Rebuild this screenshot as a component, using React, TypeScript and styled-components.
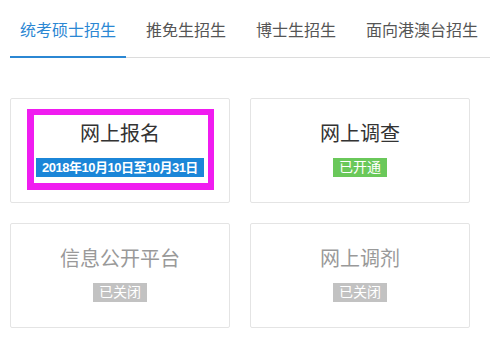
import React from "react";
import styled, { createGlobalStyle } from "styled-components";

const Global = createGlobalStyle`
  html, body { margin: 0; padding: 0; background: #fff; }
  body { font-family: "Liberation Sans", Arial, "Noto Sans CJK SC", sans-serif; }
`;

const Page = styled.div`
  width: 490px;
  height: 349px;
  padding: 0 10px;
  box-sizing: border-box;
  overflow: hidden;
`;

const TabBar = styled.div`
  display: flex;
  border-bottom: 1px solid #dcdcdc;
  margin-right: -10px;
`;

const Tab = styled.div<{ $active?: boolean }>`
  padding: 16px 10px 10px;
  margin-right: 10px;
  margin-bottom: -1px;
  font-size: 16px;
  line-height: 30px;
  white-space: nowrap;
  color: ${(p) => (p.$active ? "#2b87d3" : "#555")};
  border-bottom: 2px solid ${(p) => (p.$active ? "#2b87d3" : "transparent")};
`;

const Grid = styled.div`
  display: grid;
  grid-template-columns: 220px 220px;
  column-gap: 20px;
  row-gap: 20px;
  margin-top: 40px;
`;

const Card = styled.div`
  position: relative;
  height: 105px;
  box-sizing: border-box;
  border: 1px solid #e4e4e4;
  border-radius: 2px;
  padding-top: 21px;
  display: flex;
  flex-direction: column;
  align-items: center;
`;

const Title = styled.div<{ $off?: boolean }>`
  font-size: 20px;
  line-height: 28px;
  color: ${(p) => (p.$off ? "#999" : "#333")};
  margin-bottom: 10px;
`;

const Badge = styled.div<{ $tone: "blue" | "green" | "gray" }>`
  height: 19px;
  line-height: 19px;
  padding: 0 6px;
  color: #fff;
  font-size: ${(p) => (p.$tone === "blue" ? "13px" : "14px")};
  letter-spacing: ${(p) => (p.$tone === "blue" ? "-0.5px" : "0")};
  font-weight: ${(p) => (p.$tone === "blue" ? 700 : 400)};
  background: ${(p) =>
    p.$tone === "blue" ? "#1b86d8" : p.$tone === "green" ? "#6ac85a" : "#c2c2c2"};
  white-space: nowrap;
`;

const Highlight = styled.div`
  position: absolute;
  left: 16px;
  top: 10px;
  width: 187px;
  height: 81px;
  box-sizing: border-box;
  border: 6px solid #f01cf0;
  border-left-width: 7px;
  border-bottom-width: 7px;
  pointer-events: none;
`;

const tabs = ["统考硕士招生", "推免生招生", "博士生招生", "面向港澳台招生"];

type Item = { title: string; badge: string; tone: "blue" | "green" | "gray"; mark?: boolean };

const items: Item[] = [
  { title: "网上报名", badge: "2018年10月10日至10月31日", tone: "blue", mark: true },
  { title: "网上调查", badge: "已开通", tone: "green" },
  { title: "信息公开平台", badge: "已关闭", tone: "gray" },
  { title: "网上调剂", badge: "已关闭", tone: "gray" },
];

export default function App() {
  return (
    <Page>
      <Global />
      <TabBar>
        {tabs.map((t, i) => (
          <Tab key={t} $active={i === 0}>
            {t}
          </Tab>
        ))}
      </TabBar>
      <Grid>
        {items.map((it) => (
          <Card key={it.title}>
            <Title $off={it.tone === "gray"}>{it.title}</Title>
            <Badge $tone={it.tone}>{it.badge}</Badge>
            {it.mark && <Highlight />}
          </Card>
        ))}
      </Grid>
    </Page>
  );
}
